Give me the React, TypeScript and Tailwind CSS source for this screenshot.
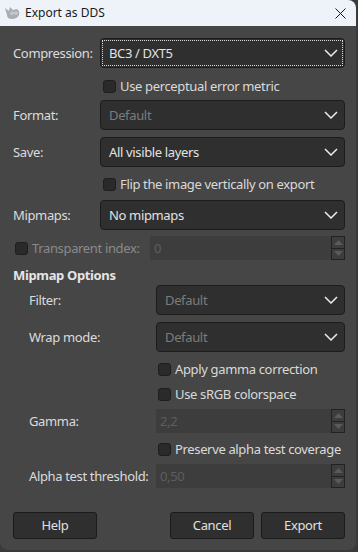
import React from "react";

const font = { fontFamily: '"Segoe UI", "Noto Sans", "Open Sans", sans-serif' };

function Chevron() {
  return (
    <svg width="14" height="8" viewBox="0 0 14 8" className="shrink-0">
      <path d="M1 1 L7 7 L13 1" fill="none" stroke="#ececec" strokeWidth="1.5" />
    </svg>
  );
}

function Combo({ value, disabled, focus }: { value: string; disabled?: boolean; focus?: boolean }) {
  return (
    <div className="flex-1 h-[30px] rounded-[4px] border border-[#1c1c1c] bg-[#2f2f2f] p-[2px]">
      <div
        className={`h-full flex items-center justify-between pl-[6px] pr-[4px] ${
          focus ? "outline outline-1 outline-dotted outline-[#d8d8d8]" : ""
        }`}
      >
        <span className={disabled ? "text-[#7c7c7c]" : "text-[#e2e2e2]"}>{value}</span>
        <Chevron />
      </div>
    </div>
  );
}

function Spin({ value }: { value: string }) {
  return (
    <div className="flex-1 h-[24px] bg-[#3d3d3d] flex items-center justify-between">
      <span className="pl-[4px] text-[#5e5e5e]">{value}</span>
      <div className="w-[14px] h-[24px] flex flex-col border border-[#222]">
        <div className="flex-1 flex items-center justify-center border-b border-[#222]">
          <svg width="9" height="5" viewBox="0 0 9 5"><path d="M0 5 L4.5 0 L9 5 Z" fill="#5a5a5a" /></svg>
        </div>
        <div className="flex-1 flex items-center justify-center">
          <svg width="9" height="5" viewBox="0 0 9 5"><path d="M0 0 L4.5 5 L9 0 Z" fill="#5a5a5a" /></svg>
        </div>
      </div>
    </div>
  );
}

function Check({ label, disabled }: { label: string; disabled?: boolean }) {
  return (
    <div className="flex items-center gap-[4px] h-[22px] whitespace-nowrap">
      <div className="w-[13px] h-[13px] shrink-0 rounded-[3px] bg-[#2a2a2a] border border-[#1e1e1e]" />
      <span className={disabled ? "text-[#8a8a8a]" : "text-[#dadada]"}>{label}</span>
    </div>
  );
}

function Button({ label }: { label: string }) {
  return (
    <div className="w-[84px] h-[27px] rounded-[3px] border border-[#1b1b1b] bg-[#2f2f2f] flex items-center justify-center text-[#e0e0e0]">
      {label}
    </div>
  );
}

export default function App() {
  return (
    <div className="w-[358px] h-[552px] bg-[#3a3a3a] text-[13px] leading-none tracking-[-0.35px]" style={font}>
      <div className="w-[356px] h-[550px] bg-[#464646] rounded-tr-[8px] rounded-b-[8px] overflow-hidden flex flex-col">
        {/* title bar */}
        <div className="h-[26px] bg-[#eef3f9] flex items-center pl-[4px] pr-[10px] shrink-0 tracking-normal">
          <svg width="17" height="14" viewBox="0 0 17 14" className="mr-[4px]">
            <path d="M1 2 L5 5 L6 1 L9 4 L13 3 Q16 5 15 9 Q13 13 8 13 Q3 13 3 9 Z" fill="#a9acb0" />
            <circle cx="8" cy="7" r="1.6" fill="#eef3f9" />
            <circle cx="12" cy="7" r="1.6" fill="#eef3f9" />
            <circle cx="8" cy="7" r="0.7" fill="#6b6e72" />
            <circle cx="12" cy="7" r="0.7" fill="#6b6e72" />
          </svg>
          <span className="text-[12px] text-[#1a1a1a]">Export as DDS</span>
          <div className="flex-1" />
          <svg width="11" height="11" viewBox="0 0 11 11">
            <path d="M0.5 0.5 L10.5 10.5 M10.5 0.5 L0.5 10.5" stroke="#1a1a1a" strokeWidth="1" />
          </svg>
        </div>

        <div className="flex flex-col pl-[13px] pr-[11px] text-[#dcdcdc]">
          <div className="flex items-center mt-[12px]">
            <span className="w-[87px]">Compression:</span>
            <Combo value="BC3 / DXT5" focus />
          </div>
          <div className="pl-[90px] mt-[7px]">
            <Check label="Use perceptual error metric" />
          </div>
          <div className="flex items-center mt-[3px]">
            <span className="w-[87px]">Format:</span>
            <Combo value="Default" disabled />
          </div>
          <div className="flex items-center mt-[7px]">
            <span className="w-[87px]">Save:</span>
            <Combo value="All visible layers" />
          </div>
          <div className="pl-[90px] mt-[6px]">
            <Check label="Flip the image vertically on export" />
          </div>
          <div className="flex items-center mt-[5px]">
            <span className="w-[87px]">Mipmaps:</span>
            <Combo value="No mipmaps" />
          </div>
          <div className="flex items-center mt-[6px]">
            <div className="w-[137px] pl-[2px]">
              <Check label="Transparent index:" disabled />
            </div>
            <Spin value="0" />
          </div>
          <div className="mt-[6px] h-[18px] flex items-center font-bold text-[#e4e4e4]">Mipmap Options</div>
          <div className="flex flex-col pl-[16px]">
            <div className="flex items-center mt-[1px]">
              <span className="w-[127px]">Filter:</span>
              <Combo value="Default" disabled />
            </div>
            <div className="flex items-center mt-[7px]">
              <span className="w-[127px]">Wrap mode:</span>
              <Combo value="Default" disabled />
            </div>
            <div className="pl-[129px] mt-[6px]">
              <Check label="Apply gamma correction" />
            </div>
            <div className="pl-[129px] mt-[3px]">
              <Check label="Use sRGB colorspace" />
            </div>
            <div className="flex items-center mt-[4px]">
              <span className="w-[127px]">Gamma:</span>
              <Spin value="2,2" />
            </div>
            <div className="pl-[129px] mt-[5px]">
              <Check label="Preserve alpha test coverage" />
            </div>
            <div className="flex items-center mt-[4px]">
              <span className="w-[127px] whitespace-nowrap">Alpha test threshold:</span>
              <Spin value="0,50" />
            </div>
          </div>
          <div className="flex items-center mt-[24px]">
            <Button label="Help" />
            <div className="flex-1" />
            <Button label="Cancel" />
            <div className="w-[7px]" />
            <Button label="Export" />
          </div>
        </div>
      </div>
    </div>
  );
}
